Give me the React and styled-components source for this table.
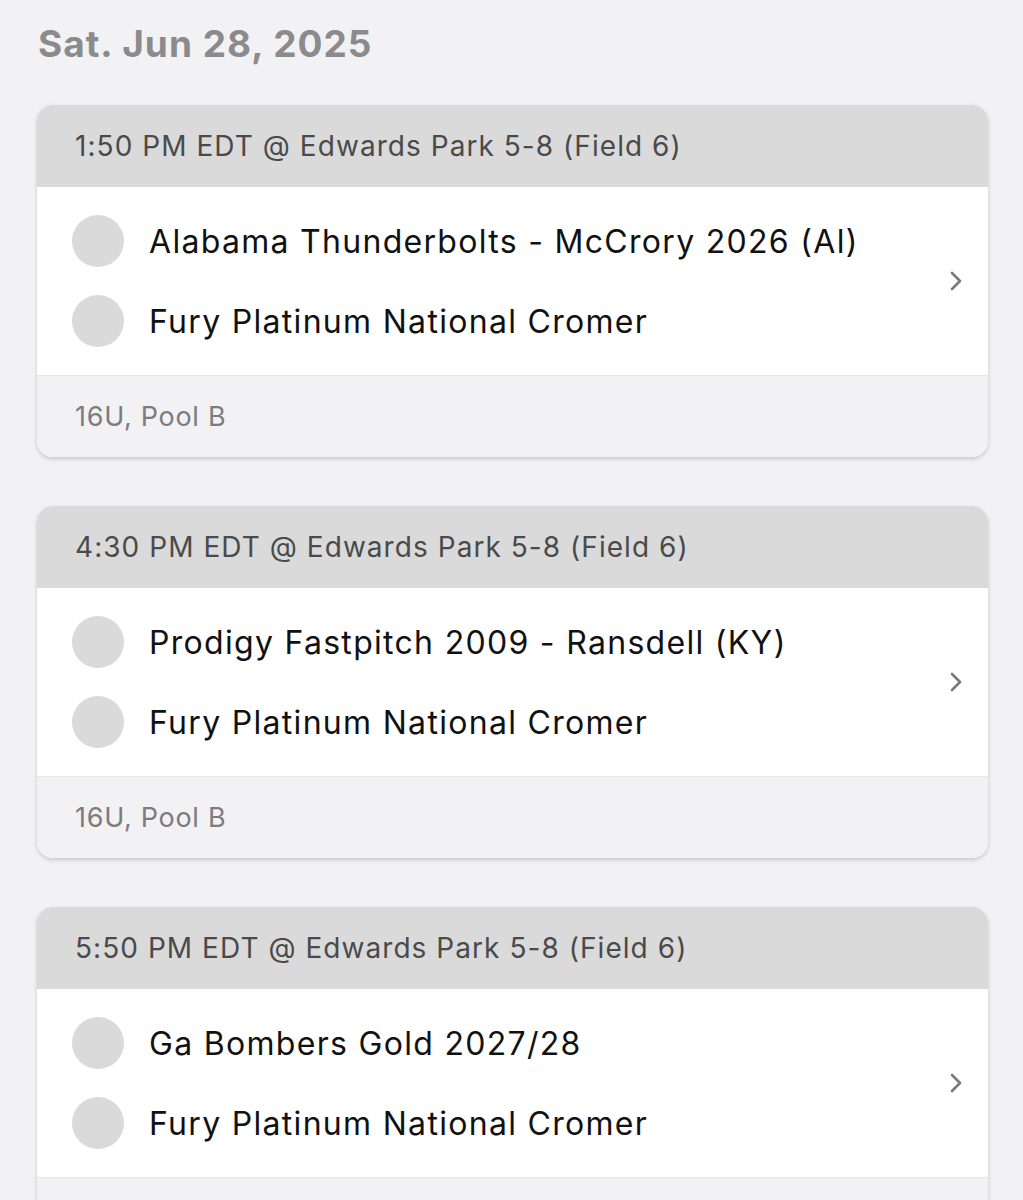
import styled, { createGlobalStyle } from 'styled-components';

const GlobalStyle = createGlobalStyle`
  html, body {
    margin: 0;
    padding: 0;
    background: #f2f2f4;
    font-family: Inter, "Noto Sans", sans-serif;
  }
`;

const Page = styled.div`
  padding: 20px 35px 0 37px;
  display: flex;
  flex-direction: column;
`;

const DateTitle = styled.h1`
  margin: 0 0 37px 1px;
  font-size: 37px;
  line-height: 48px;
  font-weight: 650;
  color: #8b8b8d;
  letter-spacing: 1px;
`;

const Card = styled.div`
  background: #fff;
  border-radius: 16px;
  box-shadow: 0 2px 4px rgba(0, 0, 0, 0.18);
  overflow: hidden;
  margin-bottom: 49px;
`;

const CardHeader = styled.div`
  height: 82px;
  background: #dadada;
  display: flex;
  align-items: center;
  padding-left: 38px;
  font-size: 28px;
  letter-spacing: 1.05px;
  color: #4a4a4a;
`;

const CardBody = styled.div`
  height: 188px;
  display: flex;
  align-items: center;
  padding: 0 24px 0 35px;
`;

const Teams = styled.div`
  flex: 1;
  display: flex;
  flex-direction: column;
  gap: 28px;
`;

const TeamRow = styled.div`
  display: flex;
  align-items: center;
  gap: 25px;
  font-size: 32px;
  letter-spacing: 1.3px;
  color: #111;
`;

const Avatar = styled.div`
  width: 52px;
  height: 52px;
  border-radius: 50%;
  background: #dadada;
  flex-shrink: 0;
`;

const Chevron = styled.svg`
  width: 16px;
  height: 24px;
  color: #7a7a7a;
`;

const CardFooter = styled.div`
  height: 81px;
  background: #f2f2f4;
  border-top: 1px solid #e6e6e8;
  display: flex;
  align-items: center;
  padding-left: 38px;
  font-size: 27px;
  letter-spacing: 0.7px;
  color: #7c7c7e;
`;

const games = [
  {
    time: '1:50 PM EDT @ Edwards Park 5-8 (Field 6)',
    teams: ['Alabama Thunderbolts - McCrory 2026 (Al)', 'Fury Platinum National Cromer'],
    pool: '16U, Pool B',
  },
  {
    time: '4:30 PM EDT @ Edwards Park 5-8 (Field 6)',
    teams: ['Prodigy Fastpitch 2009 - Ransdell (KY)', 'Fury Platinum National Cromer'],
    pool: '16U, Pool B',
  },
  {
    time: '5:50 PM EDT @ Edwards Park 5-8 (Field 6)',
    teams: ['Ga Bombers Gold 2027/28', 'Fury Platinum National Cromer'],
    pool: '16U, Pool B',
  },
];

export default function App() {
  return (
    <>
      <GlobalStyle />
      <Page>
        <DateTitle>Sat. Jun 28, 2025</DateTitle>
        {games.map((g, i) => (
          <Card key={i}>
            <CardHeader>{g.time}</CardHeader>
            <CardBody>
              <Teams>
                {g.teams.map((t) => (
                  <TeamRow key={t}>
                    <Avatar />
                    {t}
                  </TeamRow>
                ))}
              </Teams>
              <Chevron viewBox="0 0 16 24" fill="none">
                <path d="M4 4l8 8-8 8" stroke="currentColor" strokeWidth="2.6" strokeLinecap="round" strokeLinejoin="round" />
              </Chevron>
            </CardBody>
            <CardFooter>{g.pool}</CardFooter>
          </Card>
        ))}
      </Page>
    </>
  );
}
